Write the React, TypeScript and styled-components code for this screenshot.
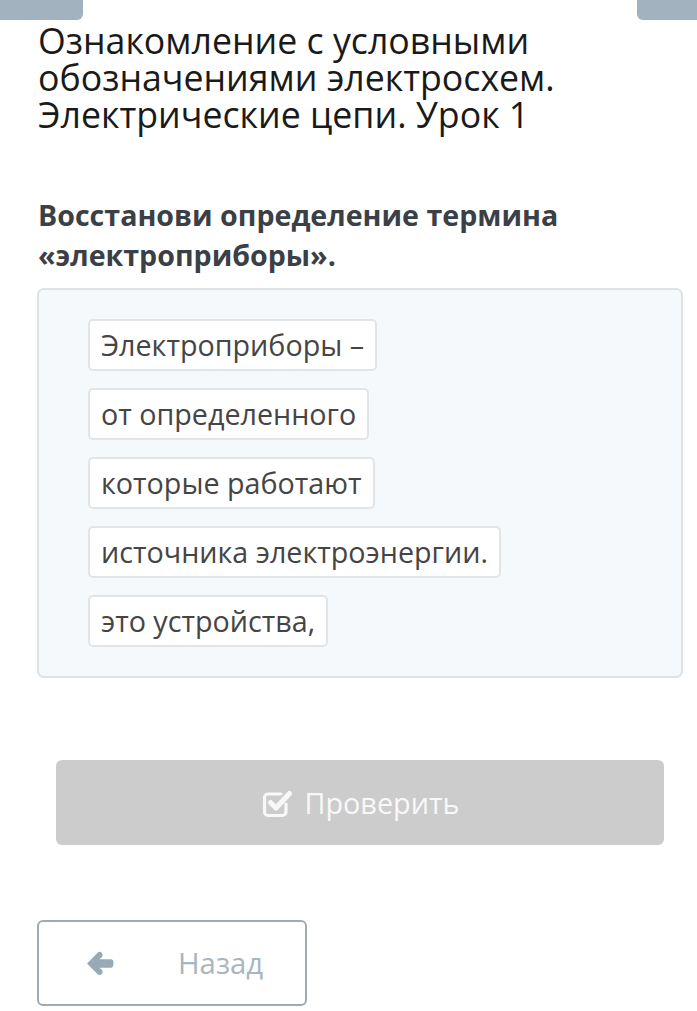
import React from "react";
import styled, { createGlobalStyle } from "styled-components";

const Global = createGlobalStyle`
  html, body { margin: 0; padding: 0; background: #ffffff; }
  body { font-family: "Open Sans", "Noto Sans", sans-serif; }
  * { box-sizing: border-box; }
`;

const Page = styled.div`
  width: 697px;
  min-height: 1011px;
  display: flex;
  flex-direction: column;
  background: #ffffff;
`;

const TopBar = styled.div`
  display: flex;
  justify-content: space-between;
  height: 20px;
`;

const Tab = styled.div<{ $side: "left" | "right" }>`
  width: ${(p) => (p.$side === "left" ? "83px" : "60px")};
  height: 20px;
  background: #a2b3bf;
  border-radius: ${(p) => (p.$side === "left" ? "0 0 6px 0" : "0 0 0 6px")};
`;

const Content = styled.div`
  display: flex;
  flex-direction: column;
  padding: 0 14px 0 37px;
`;

const Title = styled.h1`
  margin: 2px 0 0 1px;
  font-size: 35.7px;
  line-height: 37px;
  font-weight: 400;
  color: #1a1a1a;
`;

const Question = styled.h2`
  margin: 62px 0 0 1px;
  font-size: 28.6px;
  line-height: 40px;
  font-weight: 700;
  color: #3b4046;
`;

const Card = styled.div`
  margin-top: 13px;
  background: #f5f9fc;
  border: 2px solid #dce2e6;
  border-radius: 7px;
  padding: 29px 49px;
  display: flex;
  flex-direction: column;
  align-items: flex-start;
  gap: 17px;
`;

const Chip = styled.div`
  background: #ffffff;
  border: 2px solid #e2e5e8;
  border-radius: 5px;
  padding: 5px 11px;
  font-size: 28.7px;
  line-height: 38px;
  color: #454545;
  white-space: nowrap;
`;

const CheckButton = styled.button`
  margin: 82px 19px 0 19px;
  height: 85px;
  border: none;
  border-radius: 6px;
  background: #cccccc;
  color: #f8f8f8;
  font-family: inherit;
  font-size: 28.8px;
  display: flex;
  align-items: center;
  justify-content: center;
  gap: 10px;
  padding: 0 0 0 2px;
`;

const BackButton = styled.button`
  margin-top: 75px;
  width: 270px;
  height: 86px;
  border: 2px solid #9eabb2;
  border-radius: 6px;
  background: #ffffff;
  display: flex;
  align-items: center;
  padding: 0 0 0 46px;
  font-family: inherit;
  font-size: 29.3px;
  color: #a7b6c0;
  gap: 63px;
`;

const CheckIcon = () => (
  <svg width="32" height="30" viewBox="0 0 32 30" aria-hidden>
    <path
      d="M24 16 V24 a3.5 3.5 0 0 1 -3.5 3.5 H6 a3.5 3.5 0 0 1 -3.5 -3.5 V9.5 a3.5 3.5 0 0 1 3.5 -3.5 H19"
      fill="none"
      stroke="#f8f8f8"
      strokeWidth="3.2"
      strokeLinecap="round"
    />
    <path
      d="M8.5 14.5 L14 20 L27.5 5.5"
      fill="none"
      stroke="#f8f8f8"
      strokeWidth="5"
      strokeLinecap="round"
      strokeLinejoin="round"
    />
  </svg>
);

const ArrowIcon = () => (
  <svg width="30" height="27" viewBox="0 0 28 26" aria-hidden>
    <path
      d="M1.5 13 L11.5 2.8 Q13.8 0.8 15.8 2.8 Q17.6 4.9 15.8 7 L13.5 9 H24.5 Q27 9 27 13 Q27 17 24.5 17 H13.5 L15.8 19 Q17.6 21.1 15.8 23.2 Q13.8 25.2 11.5 23.2 Z"
      fill="#97aab5"
    />
  </svg>
);

const words = [
  "Электроприборы –",
  "от определенного",
  "которые работают",
  "источника электроэнергии.",
  "это устройства,",
];

export default function App() {
  return (
    <Page>
      <Global />
      <TopBar>
        <Tab $side="left" />
        <Tab $side="right" />
      </TopBar>
      <Content>
        <Title>
          Ознакомление с условными обозначениями электросхем. Электрические
          цепи. Урок 1
        </Title>
        <Question>Восстанови определение термина «электроприборы».</Question>
        <Card>
          {words.map((w) => (
            <Chip key={w}>{w}</Chip>
          ))}
        </Card>
        <CheckButton>
          <CheckIcon />
          Проверить
        </CheckButton>
        <BackButton>
          <ArrowIcon />
          Назад
        </BackButton>
      </Content>
    </Page>
  );
}
